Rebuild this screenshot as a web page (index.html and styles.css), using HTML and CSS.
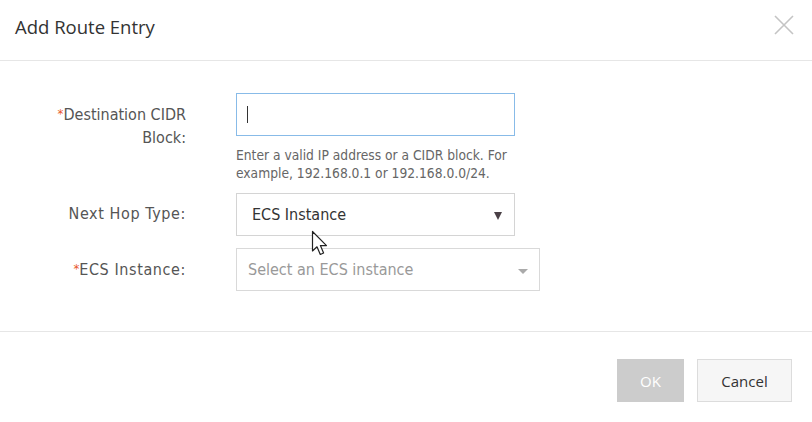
FILE: index.html
```html
<!DOCTYPE html>
<html>
<head>
<meta charset="utf-8">
<link rel="stylesheet" href="styles.css">
</head>
<body>
<div class="dialog">
  <div class="header">
    <div class="title">Add Route Entry</div>
    <svg class="close" width="22" height="22" viewBox="0 0 22 22"><path d="M2 2 L20 20 M20 2 L2 20" stroke="#c4c4c4" stroke-width="1.6" fill="none"/></svg>
  </div>
  <div class="body">
    <div class="row row-first">
      <div class="label two"><span class="req">*</span>Destination CIDR<br>Block:</div>
      <div class="field">
        <div class="input focused"><span class="caret"></span></div>
        <div class="help">Enter a valid IP address or a CIDR block. For<br>example, 192.168.0.1 or 192.168.0.0/24.</div>
      </div>
    </div>
    <div class="row">
      <div class="label">Next Hop Type:</div>
      <div class="field">
        <div class="input select"><span class="value">ECS Instance</span><span class="arrow dark"></span></div>
      </div>
    </div>
    <div class="row">
      <div class="label"><span class="req">*</span>ECS Instance:</div>
      <div class="field">
        <div class="input select wide"><span class="placeholder">Select an ECS instance</span><span class="arrow light"></span></div>
      </div>
    </div>
  </div>
  <div class="footer">
    <button class="btn ok">OK</button>
    <button class="btn cancel">Cancel</button>
  </div>
  <svg class="pointer" width="20" height="28" viewBox="0 0 20 28"><path d="M1.5 1.5 L1.5 21 L6 16.8 L9.3 24.5 L12.6 23 L9.4 15.6 L15.5 15.6 Z" fill="#fff" stroke="#222" stroke-width="1.2" stroke-linejoin="round"/></svg>
</div>
</body>
</html>
```
FILE: styles.css
```css
html, body {
  margin: 0;
  padding: 0;
  background: #fff;
}
.dialog {
  position: relative;
  width: 812px;
  height: 422px;
  overflow: hidden;
  font-family: "DejaVu Sans Condensed", "DejaVu Sans", sans-serif;
  color: #333;
}
.header {
  height: 60px;
  border-bottom: 1px solid #e6e6e6;
  display: flex;
  align-items: center;
  justify-content: space-between;
  padding: 0 17px 0 15px;
}
.title {
  font-family: "Open Sans", sans-serif;
  font-size: 18.5px;
  color: #333;
  margin-top: -7px;
}
.close {
  margin-top: -10px;
}
.body {
  padding: 32px 0 40px 0;
  display: flex;
  flex-direction: column;
  gap: 11px;
}
.row {
  display: flex;
  align-items: flex-start;
}
.row + .row + .row {
  margin-top: 1px;
}
.label {
  width: 186px;
  text-align: right;
  font-size: 16px;
  letter-spacing: 0.6px;
  color: #555;
  line-height: 23px;
  padding-top: 9px;
  box-sizing: border-box;
  flex-shrink: 0;
}
.label.two {
  padding-top: 9px;
  letter-spacing: 0;
}
.req {
  color: #e8562a;
  font-size: 13px;
  letter-spacing: 0;
  vertical-align: 2px;
}
.field {
  margin-left: 50px;
}
.input {
  width: 279px;
  height: 43px;
  box-sizing: border-box;
  border: 1px solid #d4d4d4;
  display: flex;
  align-items: center;
  position: relative;
  font-size: 16px;
}
.input.focused {
  border-color: #88bbe8;
}
.caret {
  width: 1px;
  height: 17px;
  background: #333;
  margin-left: 10px;
}
.select .value {
  margin-left: 15px;
  color: #333;
}
.select .placeholder {
  margin-left: 11px;
  color: #999;
}
.input.wide {
  width: 304px;
  border-color: #d9d9d9;
}
.arrow {
  position: absolute;
  width: 0;
  height: 0;
  border-left: 5px solid transparent;
  border-right: 5px solid transparent;
}
.arrow.dark {
  right: 12px;
  top: 18px;
  border-left-width: 4px;
  border-right-width: 4px;
  border-top: 8px solid #4a4046;
}
.arrow.light {
  right: 11px;
  top: 20px;
  border-top: 5px solid #aaa;
}
.help {
  font-size: 13.7px;
  color: #666;
  line-height: 18px;
  margin-top: 10px;
}
.footer {
  border-top: 1px solid #e6e6e6;
  display: flex;
  justify-content: flex-end;
  gap: 13px;
  padding: 27px 20px 0 0;
}
.btn {
  height: 43px;
  font-family: "Open Sans", sans-serif;
  font-size: 15px;
  box-sizing: border-box;
  margin: 0;
  cursor: default;
}
.btn.ok {
  width: 67px;
  background: #cccccc;
  border: 1px solid #cccccc;
  color: #fff;
}
.btn.cancel {
  width: 95px;
  background: #f6f6f6;
  border: 1px solid #dcdcdc;
  color: #333;
}
.pointer {
  position: absolute;
  left: 311px;
  top: 230px;
}
```
